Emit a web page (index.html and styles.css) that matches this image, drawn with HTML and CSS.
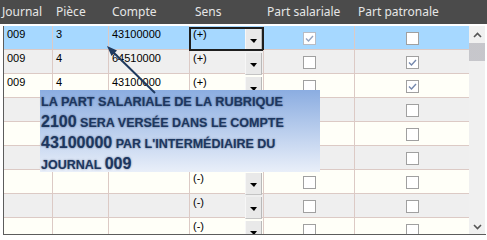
FILE: index.html
```html
<!DOCTYPE html>
<html lang="fr">
<head>
    <meta charset="UTF-8">
    <meta name="viewport" content="width=device-width, initial-scale=1.0">
    <title>Ventilation comptable</title>
    <link rel="stylesheet" href="styles.css">
</head>
<body>
    <div class="grid">
        <div class="head">
            <div>Journal</div>
            <div>Pièce</div>
            <div>Compte</div>
            <div class="h-sens">Sens</div>
            <div>Part salariale</div>
            <div>Part patronale</div>
        </div>

        <div class="body">
            <div class="rows">
                <div class="row selected">
                    <div class="cell">009</div>
                    <div class="cell">3</div>
                    <div class="cell">43100000</div>
                    <div class="cell sens focus"><span class="sign">(+)</span><span class="drop"><i></i></span></div>
                    <div class="cell check"><span class="box checked faded"><svg viewBox="0 0 11 11"><polyline points="2,5.5 4.5,8 9,3"/></svg></span></div>
                    <div class="cell check last"><span class="box"></span></div>
                </div>
                <div class="row">
                    <div class="cell">009</div>
                    <div class="cell">4</div>
                    <div class="cell">64510000</div>
                    <div class="cell sens"><span class="sign">(+)</span><span class="drop"><i></i></span></div>
                    <div class="cell check"><span class="box"></span></div>
                    <div class="cell check last"><span class="box checked"><svg viewBox="0 0 11 11"><polyline points="2,5.5 4.5,8 9,3"/></svg></span></div>
                </div>
                <div class="row">
                    <div class="cell">009</div>
                    <div class="cell">4</div>
                    <div class="cell">43100000</div>
                    <div class="cell sens"><span class="sign">(+)</span><span class="drop"><i></i></span></div>
                    <div class="cell check"><span class="box"></span></div>
                    <div class="cell check last"><span class="box checked"><svg viewBox="0 0 11 11"><polyline points="2,5.5 4.5,8 9,3"/></svg></span></div>
                </div>
                <!-- lignes masquées en partie par la bulle -->
                <div class="row">
                    <div class="cell"></div><div class="cell"></div><div class="cell"></div>
                    <div class="cell sens"><span class="sign"></span><span class="drop"><i></i></span></div>
                    <div class="cell check"><span class="box"></span></div>
                    <div class="cell check last"><span class="box"></span></div>
                </div>
                <div class="row">
                    <div class="cell"></div><div class="cell"></div><div class="cell"></div>
                    <div class="cell sens"><span class="sign"></span><span class="drop"><i></i></span></div>
                    <div class="cell check"><span class="box"></span></div>
                    <div class="cell check last"><span class="box"></span></div>
                </div>
                <div class="row">
                    <div class="cell"></div><div class="cell"></div><div class="cell"></div>
                    <div class="cell sens"><span class="sign"></span><span class="drop"><i></i></span></div>
                    <div class="cell check"><span class="box"></span></div>
                    <div class="cell check last"><span class="box"></span></div>
                </div>
                <div class="row">
                    <div class="cell"></div><div class="cell"></div><div class="cell"></div>
                    <div class="cell sens"><span class="sign">(-)</span><span class="drop"><i></i></span></div>
                    <div class="cell check"><span class="box"></span></div>
                    <div class="cell check last"><span class="box"></span></div>
                </div>
                <div class="row">
                    <div class="cell"></div><div class="cell"></div><div class="cell"></div>
                    <div class="cell sens"><span class="sign">(-)</span><span class="drop"><i></i></span></div>
                    <div class="cell check"><span class="box"></span></div>
                    <div class="cell check last"><span class="box"></span></div>
                </div>
                <div class="row">
                    <div class="cell"></div><div class="cell"></div><div class="cell"></div>
                    <div class="cell sens"><span class="sign">(-)</span><span class="drop"><i></i></span></div>
                    <div class="cell check"><span class="box"></span></div>
                    <div class="cell check last"><span class="box"></span></div>
                </div>
            </div>

            <div class="scroll">
                <div class="scroll-btn"><svg viewBox="0 0 9 6"><polyline points="1,5 4.5,1.5 8,5"/></svg></div>
                <div class="thumb"></div>
                <div class="scroll-track"></div>
                <div class="scroll-btn down"><svg viewBox="0 0 9 6"><polyline points="1,1 4.5,4.5 8,1"/></svg></div>
            </div>
        </div>

        <!-- bulle d'explication -->
        <div class="tip">
            <div class="first">LA PART SALARIALE DE LA RUBRIQUE</div>
            <div><b class="num">2100</b> SERA VERSÉE DANS LE COMPTE</div>
            <div><b class="num">43100000</b> PAR L'INTERMÉDIAIRE DU</div>
            <div>JOURNAL <b class="num">009</b></div>
        </div>
        <svg class="arrow" viewBox="0 0 487 240">
            <line x1="155" y1="93" x2="112" y2="51"/>
            <polygon points="107,46 117,50.5 111.5,56"/>
        </svg>
    </div>
</body>
</html>
```

FILE: styles.css
```css
body {
    margin: 0;
    background: #fff;
    font-family: "Liberation Sans", Arial, sans-serif;
}
.grid {
    position: relative;
    width: 487px;
    height: 240px;
    overflow: hidden;
}
.head {
    display: grid;
    grid-template-columns: 53px 56px 81px 74px 91px 1fr;
    height: 24px;
    background: #4b4b4b;
    color: #e6e6e6;
    font-family: "Noto Sans", sans-serif;
    font-size: 12px;
    line-height: 24px;
    border-bottom: 2px solid #fff;
}
.head div {
    padding-left: 3px;
    white-space: nowrap;
}
.head div:first-child {
    padding-left: 2px;
}
.head .h-sens {
    padding-left: 5px;
}
.body {
    display: flex;
    width: 482px;
    height: 208px;
    margin-left: 3px;
    border-left: 1px solid #5c5c5c;
    border-bottom: 1px solid #5c5c5c;
}
.rows {
    width: 465px;
    overflow: hidden;
}
.row {
    display: grid;
    grid-template-columns: 49px 56px 81px 74px 91px 114px;
    height: 24px;
    box-sizing: border-box;
    border-bottom: 1px solid #dccac5;
    background: #fffff8;
}
.row:nth-child(even) {
    background: #efefef;
}
.row.selected {
    background: #a6d8ff;
}
.cell {
    padding: 2px 3px 0;
    border-right: 1px solid #dccac5;
    font-size: 11px;
    line-height: 13px;
    color: #000;
    box-sizing: border-box;
}
.cell.last {
    border-right: none;
}
.sens {
    display: flex;
    position: relative;
    padding-right: 1px;
}
.sens .sign {
    flex: 1;
}
.drop {
    width: 17px;
    margin-top: 1px;
    box-sizing: border-box;
    background: #e9e9e9;
    border-left: 1px solid #f7f7f7;
    border-right: 1px solid #b9b9b9;
    border-bottom: 1px solid #c4c4c4;
    display: flex;
    justify-content: center;
    padding-top: 10px;
    margin-bottom: -2px;
}
.drop i {
    width: 0;
    height: 0;
    border-left: 4px solid transparent;
    border-right: 3px solid transparent;
    border-top: 4px solid #000;
}
.focus::after {
    content: "";
    position: absolute;
    top: 1px;
    left: -1px;
    right: -1px;
    bottom: -2px;
    border: 2px solid #1e1e1e;
}
.check {
    display: flex;
    align-items: center;
    justify-content: center;
    padding: 2px 0 0;
}
.box {
    width: 13px;
    height: 13px;
    box-sizing: border-box;
    border: 1px solid #a0a0a0;
    background: #fff;
}
.box svg {
    display: block;
    width: 11px;
    height: 11px;
    fill: none;
    stroke: #7488ad;
    stroke-width: 1.4;
}
.box.faded {
    border-color: #b8bcc4;
}
.box.faded svg {
    stroke: #93a3c0;
}
.scroll {
    width: 16px;
    background: #f0f0f0;
    display: flex;
    flex-direction: column;
}
.scroll-btn {
    height: 17px;
    display: flex;
    align-items: center;
    justify-content: center;
}
.scroll-btn.down {
    height: 16px;
    padding-top: 2px;
    box-sizing: border-box;
}
.scroll-btn svg {
    width: 9px;
    height: 6px;
    fill: none;
    stroke: #555;
    stroke-width: 1.6;
}
.thumb {
    height: 18px;
    background-color: #d6d6d8;
    background-image: radial-gradient(#b4b4bc 0.6px, transparent 0.8px);
    background-size: 2px 2px;
}
.scroll-track {
    flex: 1;
}
.tip {
    position: absolute;
    left: 40px;
    top: 90px;
    width: 280px;
    height: 82px;
    box-sizing: border-box;
    padding: 2px 0 0 1px;
    background: linear-gradient(#8badE1, #e9eff9);
    color: #1d375f;
    font-weight: bold;
    font-size: 12.5px;
    line-height: 21px;
    white-space: nowrap;
    text-shadow: 0 0 2px rgba(20, 40, 80, 0.6);
}
.tip .first {
    font-size: 12.7px;
}
.tip .num {
    font-size: 16px;
    line-height: 1;
}
.arrow {
    position: absolute;
    left: 0;
    top: 0;
    width: 487px;
    height: 240px;
    pointer-events: none;
}
.arrow line {
    stroke: #1f3a5f;
    stroke-width: 2;
}
.arrow polygon {
    fill: #1f3a5f;
}
```
